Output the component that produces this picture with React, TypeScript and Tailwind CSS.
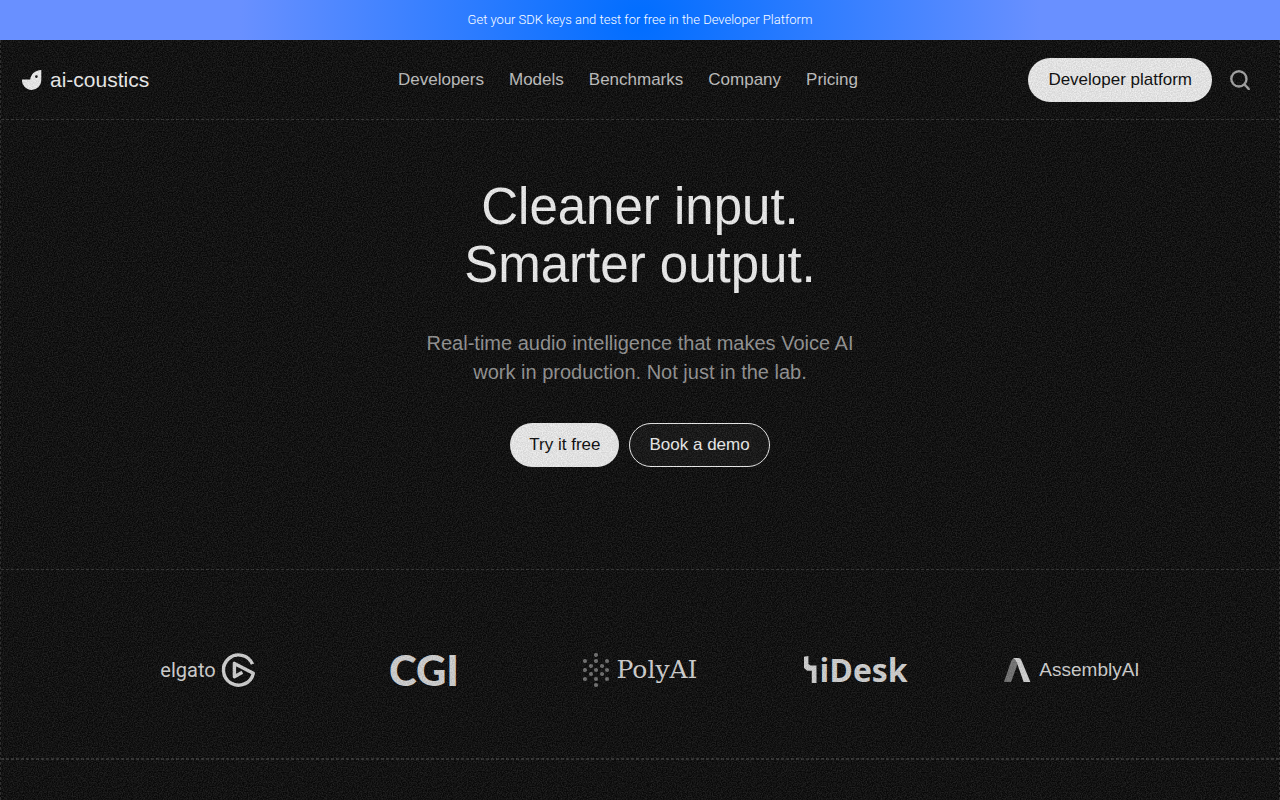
const navItems = ["Developers", "Models", "Benchmarks", "Company", "Pricing"];

const polyDots = [
  [13, 2], [2, 8], [13, 8], [24, 8], [8, 13], [19, 13], [2, 17], [13, 17],
  [24, 17], [8, 21], [19, 21], [2, 26], [13, 26], [24, 26], [13, 32],
];

function Grain() {
  return (
    <svg
      className="pointer-events-none absolute inset-0 h-full w-full opacity-10"
      aria-hidden="true"
    >
      <filter id="grain" x="0" y="0" width="100%" height="100%" colorInterpolationFilters="sRGB">
        <feTurbulence type="fractalNoise" baseFrequency="0.8" numOctaves="3" stitchTiles="stitch" />
        <feColorMatrix
          type="matrix"
          values="2 0 0 0 -0.6  2 0 0 0 -0.6  2 0 0 0 -0.6  0 0 0 0 1"
        />
      </filter>
      <rect width="100%" height="100%" filter="url(#grain)" />
    </svg>
  );
}

function Banner() {
  return (
    <a
      href="#"
      className="flex h-10 items-center justify-center bg-[#6990ff] bg-[radial-gradient(circle_at_center,#006dff,#6990ff_400px)] font-[Roboto,sans-serif] text-[13px] font-light text-white"
    >
      Get your SDK keys and test for free in the Developer Platform
    </a>
  );
}

function Header() {
  return (
    <header className="grid h-20 grid-cols-[1fr_auto_1fr] items-center border-b border-dashed border-[#303030] pr-[29px] pl-[21px]">
      <a href="#" className="flex items-center gap-2 text-[21px] text-[#f2f2f2]">
        <svg width="20" height="20" viewBox="0 0 20 20" aria-hidden="true">
          <path
            d="M0 9.5h8.2C9 4.3 12.6.4 19.3 0v10.2A9.7 9.7 0 0 1 9.6 20 9.7 9.7 0 0 1 0 9.5z"
            fill="currentColor"
          />
          <circle cx="14.4" cy="6.6" r="1.3" fill="#0a0a0a" />
        </svg>
        ai-coustics
      </a>
      <nav className="mr-4 flex gap-[25px] text-[17px] text-[#c2c2c2]">
        {navItems.map((item) => (
          <a key={item} href="#">
            {item}
          </a>
        ))}
      </nav>
      <div className="flex items-center justify-end gap-[18px]">
        <button className="h-11 rounded-full bg-[#f0f0f0] px-5 text-[17px] text-[#0a0a0a]">
          Developer platform
        </button>
        <button aria-label="Search">
          <svg width="20" height="20" viewBox="0 0 20 20" fill="none" stroke="#a3a3a3" strokeWidth="2.4" aria-hidden="true">
            <circle cx="8.9" cy="8.9" r="7.6" />
            <path d="m14.2 14.2 5.4 5.6" />
          </svg>
        </button>
      </div>
    </header>
  );
}

function Hero() {
  return (
    <section className="flex flex-col items-center border-b border-dashed border-[#303030] pt-[58px] pb-[102px] text-center">
      <h1 className="text-[51px] leading-[58px] text-[#f2f2f2]">
        Cleaner input.
        <br />
        Smarter output.
      </h1>
      <p className="mt-[35px] text-[20px] leading-[29px] text-[#949494]">
        Real-time audio intelligence that makes Voice AI
        <br />
        work in production. Not just in the lab.
      </p>
      <div className="mt-9 flex gap-[10px] text-[17px]">
        <button className="h-11 rounded-full bg-[#f0f0f0] px-[19px] text-[#0a0a0a]">Try it free</button>
        <button className="h-11 rounded-full border border-[#f2f2f2] bg-[#121212] px-[19px] text-[#f2f2f2]">
          Book a demo
        </button>
      </div>
    </section>
  );
}

function Logos() {
  return (
    <section className="border-b border-dashed border-[#303030] pt-[76px] pb-[64px] text-[#d4d4d4]">
      <ul className="mx-auto grid max-w-[1080px] grid-cols-5 items-center justify-items-center">
        <li className="flex h-12 items-center gap-[6px] font-[Roboto,sans-serif] text-[20px]">
          elgato
          <svg className="overflow-visible" width="34" height="34" viewBox="0 0 34 34" fill="none" stroke="currentColor" strokeWidth="3.4" strokeLinejoin="round" aria-hidden="true">
            <path d="M30.5 11.2A15.1 15.1 0 1 0 31.3 20.3L12.4 10.4v13.4l8-4.6" />
          </svg>
        </li>
        <li className="flex h-12 items-center font-[Lato,sans-serif] text-[42px] font-black">CGI</li>
        <li className="flex h-12 items-center gap-[7px] font-['DejaVu_Serif',serif] text-[25px]">
          <svg width="27" height="34" viewBox="0 0 27 34" fill="#6f6f6f" aria-hidden="true">
            {polyDots.map(([x, y]) => (
              <circle key={`${x}-${y}`} cx={x} cy={y} r="2.1" />
            ))}
          </svg>
          PolyAI
        </li>
        <li className="flex h-12 items-center gap-[2px] font-['Open_Sans',sans-serif] text-[32px] font-bold">
          <svg width="13" height="28" viewBox="0 0 13 28" fill="currentColor" aria-hidden="true">
            <path d="M0 .8 4.4 0v8L6.6 9.6h5.9V27H7.8V14.8H3.3L0 12z" />
          </svg>
          iDesk
        </li>
        <li className="flex h-12 items-center gap-2 text-[19px]">
          <svg width="27" height="24" viewBox="0 0 27 24" aria-hidden="true">
            <path d="M0 24 7 3.4Q8.3 0 11.5 0L13.5 6.6 7 24z" fill="#747474" />
            <path d="M9 0h5.4q2.2 0 3.1 2.4L26.4 24h-6.8L12.8 4.6Q11.4.8 9 0z" fill="currentColor" />
          </svg>
          AssemblyAI
        </li>
      </ul>
    </section>
  );
}

export default function App() {
  return (
    <div className="flex min-h-screen flex-col bg-[#0a0a0a] font-['Liberation_Sans',Arial,sans-serif]">
      <Banner />
      <main className="relative flex-1 border-x border-dashed border-[#303030]">
        <Header />
        <Hero />
        <Logos />
        <section className="border-t border-dashed border-[#303030]" />
        <Grain />
      </main>
    </div>
  );
}
